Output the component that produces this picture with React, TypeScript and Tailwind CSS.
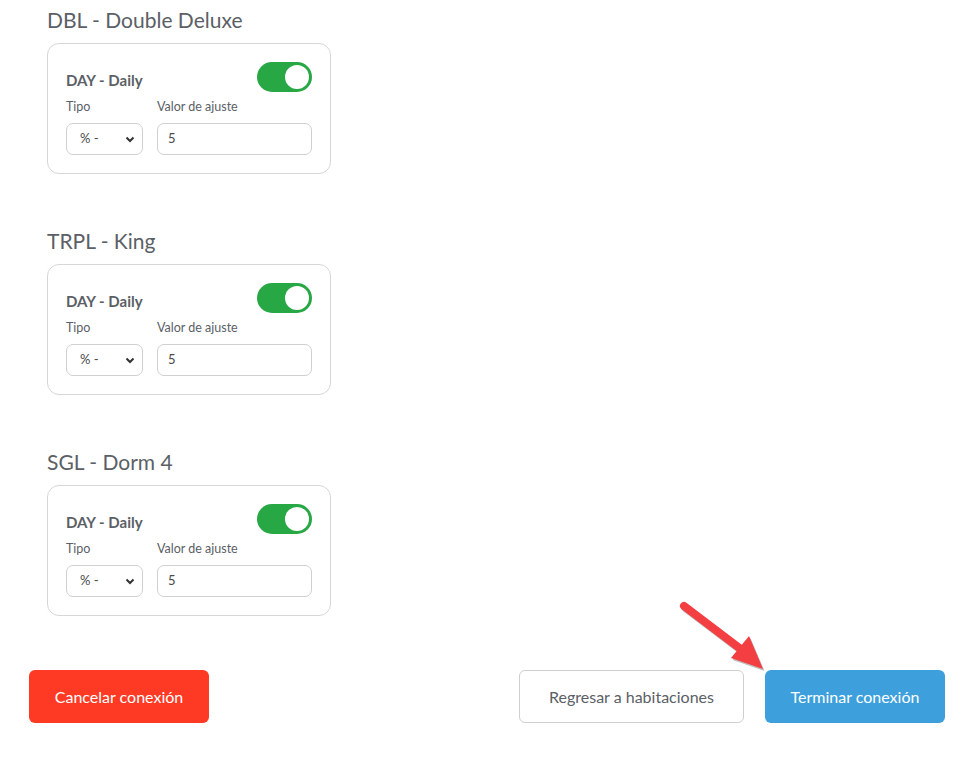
import React from "react";

function Toggle() {
  return (
    <div className="w-[55px] h-[30px] rounded-full bg-[#28a745] flex items-center justify-end pr-[3px]">
      <div className="w-[24px] h-[24px] rounded-full bg-white" />
    </div>
  );
}

function Section({ title }: { title: string }) {
  return (
    <div>
      <h2 className="text-[21px] leading-[26px] text-[#5b6066] mb-[10px]">{title}</h2>
      <div className="w-[284px] border border-[#d6d6d6] rounded-[12px] px-[18px] pt-[18px] pb-[18px]">
        <div className="flex items-center justify-between">
          <span className="text-[15px] font-bold text-[#5b6066] pt-[6px] leading-[20px]">DAY - Daily</span>
          <Toggle />
        </div>
        <div className="flex gap-[14px] mt-[6px]">
          <div className="w-[77px]">
            <div className="text-[12.5px] leading-[18px] text-[#5b6066] mb-[7px]">Tipo</div>
            <div className="h-[32px] border border-[#d0d0d0] rounded-[7px] flex items-center justify-between pl-[13px] pr-[6px]">
              <span className="text-[13px] text-[#4a4a4a]">% -</span>
              <svg width="12" height="12" viewBox="0 0 12 12">
                <path d="M2.5 4.5 L6 8 L9.5 4.5" stroke="#333" strokeWidth="2" fill="none" />
              </svg>
            </div>
          </div>
          <div className="w-[155px]">
            <div className="text-[12.5px] leading-[18px] text-[#5b6066] mb-[7px]">Valor de ajuste</div>
            <div className="h-[32px] border border-[#d0d0d0] rounded-[7px] flex items-center pl-[10px]">
              <span className="text-[13px] text-[#4a4a4a]">5</span>
            </div>
          </div>
        </div>
      </div>
    </div>
  );
}

export default function App() {
  return (
    <div className="relative w-[966px] h-[758px] bg-white" style={{ fontFamily: "Lato, 'Noto Sans', sans-serif" }}>
      <div className="pl-[47px] pt-[7px] flex flex-col gap-[54px]">
        <Section title="DBL - Double Deluxe" />
        <Section title="TRPL - King" />
        <Section title="SGL - Dorm 4" />
      </div>
      <div className="flex items-center justify-between pl-[29px] pr-[21px] mt-[54px]">
        <button className="w-[180px] h-[53px] rounded-[6px] bg-[#ff3a24] text-white text-[16px]">Cancelar conexión</button>
        <div className="flex gap-[21px]">
          <button className="w-[225px] h-[53px] rounded-[6px] bg-white border border-[#cfcfcf] text-[#5b6066] text-[16px]">Regresar a habitaciones</button>
          <button className="w-[180px] h-[53px] rounded-[6px] bg-[#3d9fdb] text-white text-[16px]">Terminar conexión</button>
        </div>
      </div>
      <svg className="absolute left-0 top-0 pointer-events-none" width="966" height="758">
        <g opacity="0.25" transform="translate(1.5,2)">
          <line x1="684" y1="606" x2="742" y2="650" stroke="#000" strokeWidth="8" strokeLinecap="round" />
          <polygon points="731,658 749,636 763,669" fill="#000" />
        </g>
        <line x1="684" y1="606" x2="742" y2="650" stroke="#f43f42" strokeWidth="8" strokeLinecap="round" />
        <polygon points="731,658 749,636 763,669" fill="#f43f42" />
      </svg>
    </div>
  );
}
